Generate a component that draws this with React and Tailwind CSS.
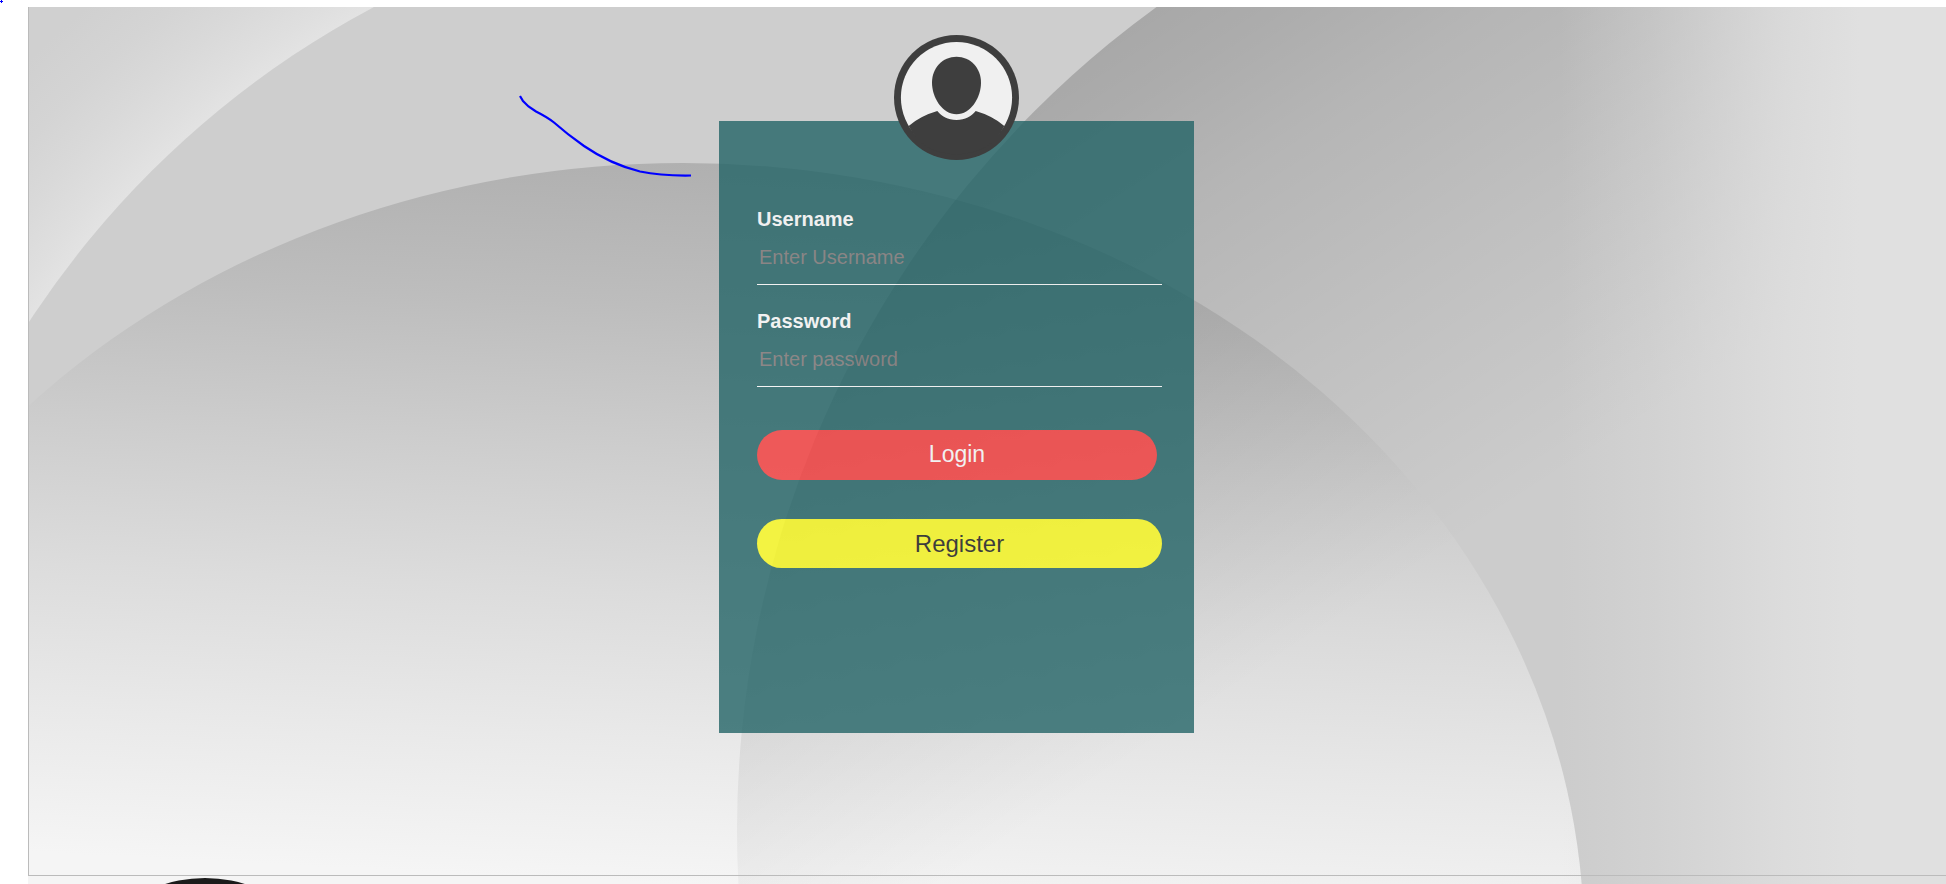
import React from "react";

function Backdrop() {
  return (
    <svg
      className="absolute inset-0 h-full w-full"
      viewBox="28 7 1918 877"
      preserveAspectRatio="none"
      aria-hidden="true"
    >
      <defs>
        <radialGradient id="glow" gradientUnits="userSpaceOnUse" cx="812" cy="833" r="1100">
          <stop offset="0.848" stopColor="#e3e3e3" />
          <stop offset="0.87" stopColor="#dfdfdf" />
          <stop offset="0.91" stopColor="#d9d9d9" />
          <stop offset="0.95" stopColor="#d4d4d4" />
          <stop offset="1" stopColor="#d0d0d0" />
        </radialGradient>
        <linearGradient id="hill" gradientUnits="userSpaceOnUse" x1="702" y1="163" x2="666" y2="884">
          <stop offset="0" stopColor="#b0b0b0" />
          <stop offset="0.2" stopColor="#bdbdbd" />
          <stop offset="0.4" stopColor="#cdcdcd" />
          <stop offset="0.6" stopColor="#dcdcdc" />
          <stop offset="0.8" stopColor="#e9e9e9" />
          <stop offset="1" stopColor="#f5f5f5" />
        </linearGradient>
        <linearGradient id="shade" gradientUnits="userSpaceOnUse" x1="1158" y1="7" x2="1492" y2="522">
          <stop offset="0" stopColor="#000" stopOpacity="0.185" />
          <stop offset="0.11" stopColor="#000" stopOpacity="0.165" />
          <stop offset="0.3" stopColor="#000" stopOpacity="0.12" />
          <stop offset="0.6" stopColor="#000" stopOpacity="0.07" />
          <stop offset="0.8" stopColor="#000" stopOpacity="0.04" />
          <stop offset="1" stopColor="#000" stopOpacity="0.01" />
        </linearGradient>
        <linearGradient id="fade" gradientUnits="userSpaceOnUse" x1="1560" y1="0" x2="1860" y2="0">
          <stop offset="0" stopColor="#e0e0e0" stopOpacity="0" />
          <stop offset="0.3" stopColor="#e0e0e0" stopOpacity="0.27" />
          <stop offset="0.75" stopColor="#e0e0e0" stopOpacity="0.8" />
          <stop offset="1" stopColor="#e0e0e0" />
        </linearGradient>
      </defs>
      <rect x="28" y="7" width="1918" height="877" fill="url(#glow)" />
      <circle cx="812" cy="833" r="935" fill="#cecece" />
      <rect x="812" y="7" width="1134" height="877" fill="#cecece" />
      <ellipse cx="683" cy="940" rx="901" ry="777" fill="url(#hill)" />
      <circle cx="1754" cy="830" r="1017" fill="url(#shade)" />
      <rect x="1560" y="7" width="386" height="877" fill="url(#fade)" />
    </svg>
  );
}

function Avatar({ className }) {
  return (
    <svg className={className} viewBox="0 0 125 125" aria-hidden="true">
      <circle cx="62.5" cy="62.5" r="62.5" fill="#1b1b1b" />
      <circle cx="62.5" cy="62.5" r="55.6" fill="#f9f9f9" />
      <path
        d="M62.5 21.7C76.5 21.7 87 33 87 47.500C87 63 76.500 79.300 62.500 79.300C48.500 79.300 38 63 38 47.500C38 33 48.500 21.700 62.500 21.700Z"
        fill="#1b1b1b"
      />
      <path
        d="M14.700 91Q26 81 43.300 76C48 81.500 53.500 85 62.500 85C71.500 85 77 81.500 81.700 76Q99 81 110.300 91Q97 118.500 62.500 119.500Q28 118.500 14.700 91Z"
        fill="#1b1b1b"
      />
    </svg>
  );
}

function Field({ id, label, type, placeholder }) {
  return (
    <div className="flex flex-col">
      <label htmlFor={id} className="text-[20px] leading-[30px] font-bold text-white">
        {label}
      </label>
      <input
        id={id}
        type={type}
        placeholder={placeholder}
        className="h-[51px] w-full border-b border-white bg-transparent px-0.5 pb-1 text-[20px] text-white outline-none placeholder:text-[#7f7979]"
      />
    </div>
  );
}

export default function App() {
  return (
    <div className="relative min-h-screen bg-white pt-[7px] pl-7 font-['Liberation_Sans',Arial,sans-serif]">
      <div className="relative">
        <Backdrop />
        <main className="relative flex h-[869px] items-start justify-center border-b border-l border-[#bbbbbb] pt-[114px] pr-[62px]">
          <form
            className="relative flex h-[612px] w-[475px] flex-col bg-[#246467] pt-[83px] pr-8 pl-[38px] opacity-80"
            onSubmit={(e) => e.preventDefault()}
          >
            <Avatar className="absolute -top-[86px] left-[175px] size-[125px]" />
            <div className="flex flex-col gap-[21px]">
              <Field id="username" label="Username" type="text" placeholder="Enter Username" />
              <Field id="password" label="Password" type="password" placeholder="Enter password" />
            </div>
            <button type="submit" className="mt-[43px] h-[50px] w-[400px] rounded-full bg-[#f73c3d] pb-0.5 text-[23px] text-white">
              Login
            </button>
            <button type="button" className="mt-[39px] h-[49px] w-full rounded-full bg-[#fbfb1d] text-[24px] text-[#1b1b1b]">
              Register
            </button>
          </form>
        </main>
        <section className="relative h-2 overflow-hidden pt-0.5 pl-[42px]">
          <Avatar className="size-[270px]" />
        </section>
      </div>
      <svg className="pointer-events-none absolute top-0 left-0 h-[200px] w-[720px]" viewBox="0 0 720 200" fill="none" aria-hidden="true">
        <path d="M0 1.500h3M1.500 0v3" stroke="#0000ff" strokeWidth="1" />
        <path
          d="M520 96L523 101L528.500 106.500L536 111.500Q547 117 554 122.500C563 130.500 574 139 584 146C600 157 618 166 640 171.500Q662 176 691 175.500"
          stroke="#0000ff"
          strokeWidth="2.200"
        />
      </svg>
    </div>
  );
}
